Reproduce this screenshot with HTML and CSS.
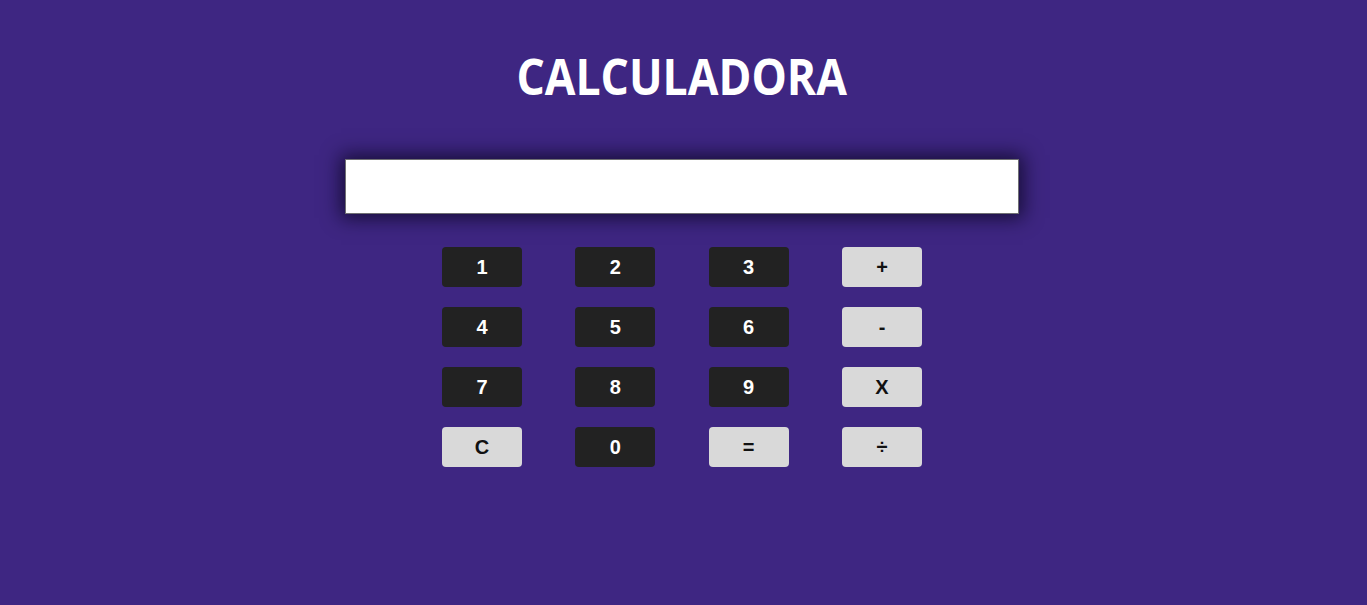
FILE: index.html
```html
<!DOCTYPE html>
<html lang="pt">
<head>
<meta charset="utf-8">
<title>Calculadora</title>
<link rel="stylesheet" href="styles.css">
</head>
<body>
<main class="app">
  <h1 class="title">CALCULADORA</h1>
  <div class="display"></div>
  <div class="keys">
    <button class="key dark">1</button>
    <button class="key dark">2</button>
    <button class="key dark">3</button>
    <button class="key light">+</button>
    <button class="key dark">4</button>
    <button class="key dark">5</button>
    <button class="key dark">6</button>
    <button class="key light">-</button>
    <button class="key dark">7</button>
    <button class="key dark">8</button>
    <button class="key dark">9</button>
    <button class="key light">X</button>
    <button class="key light">C</button>
    <button class="key dark">0</button>
    <button class="key light">=</button>
    <button class="key light">÷</button>
  </div>
</main>
</body>
</html>
```

FILE: styles.css
```css
html, body {
  margin: 0;
  padding: 0;
  height: 100%;
}
body {
  background: #3e2682;
  font-family: "Liberation Sans", Arial, sans-serif;
}
.app {
  display: flex;
  flex-direction: column;
  align-items: center;
  padding-top: 46px;
  margin-right: 3px;
}
.title {
  margin: 0;
  color: #ffffff;
  font-family: "Open Sans", "DejaVu Sans", sans-serif;
  font-weight: bold;
  font-size: 50px;
  line-height: 60px;
  letter-spacing: 0;
  transform: scaleX(0.89);
}
.display {
  margin-top: 53px;
  width: 672px;
  height: 53px;
  background: #ffffff;
  border: 1px solid #6f6f73;
  box-shadow: 0 0 18px 4px rgba(10, 5, 30, 0.75);
}
.keys {
  margin-top: 33px;
  display: grid;
  grid-template-columns: repeat(4, 80px);
  column-gap: 53.33px;
  row-gap: 20px;
}
.key {
  width: 80px;
  height: 40px;
  border: none;
  border-radius: 4px;
  font-family: "Liberation Sans", Arial, sans-serif;
  font-weight: bold;
  font-size: 20px;
  padding: 0;
  cursor: pointer;
}
.dark {
  background: #222222;
  color: #ffffff;
}
.light {
  background: #d9d9d9;
  color: #111111;
}
```
